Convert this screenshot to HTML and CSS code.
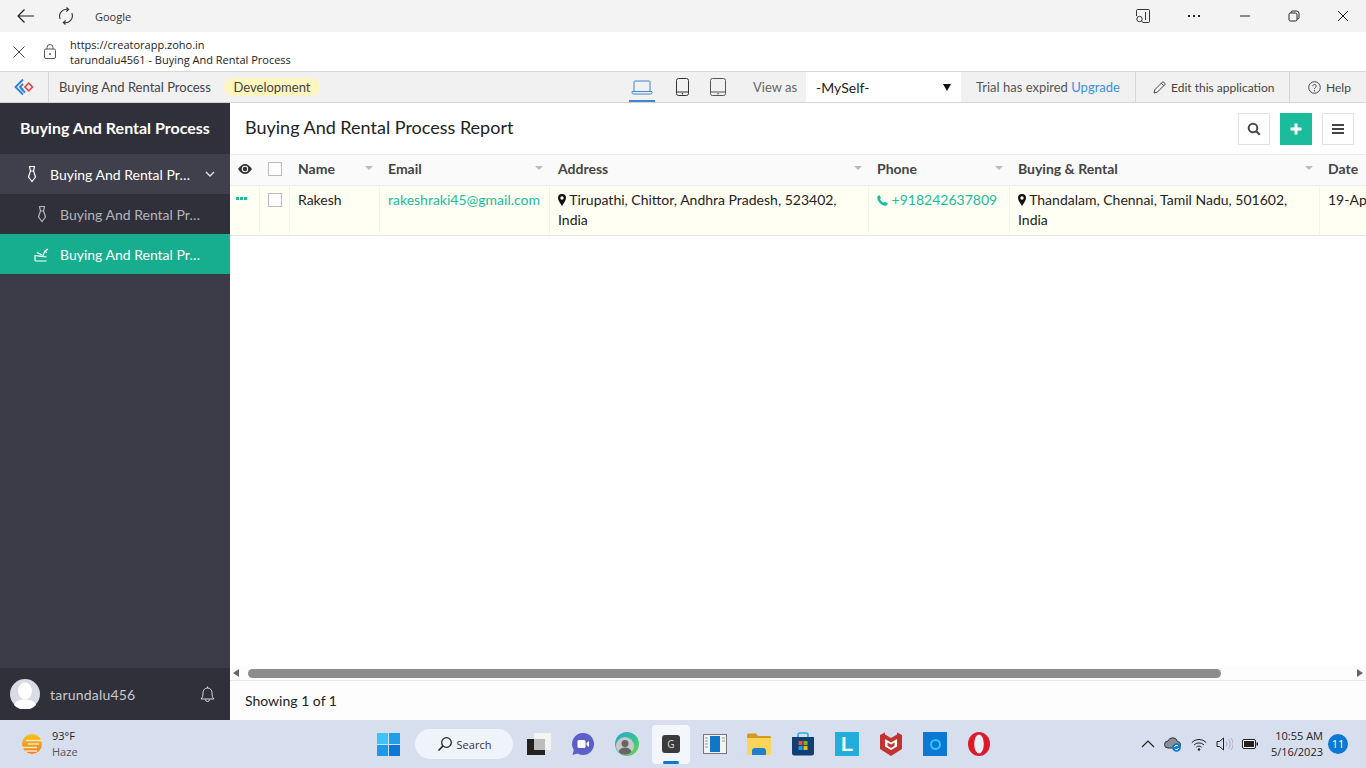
FILE: index.html
```html
<!DOCTYPE html>
<html lang="en">
<head>
    <meta charset="UTF-8">
    <title>Buying And Rental Process</title>
    <link rel="stylesheet" href="styles.css">
</head>
<body>
    <!-- browser chrome -->
    <div class="titlebar">
        <svg class="tb-back" width="20" height="16" viewBox="0 0 20 16"><path d="M18 8H2M8.500 1.500 2 8l6.500 6.500" fill="none" stroke="#222" stroke-width="1.200"/></svg>
        <svg class="tb-reload" width="18" height="18" viewBox="0 0 18 18"><path d="M3.200 12A7 7 0 0 1 11.500 2.500M14.800 6A7 7 0 0 1 6.500 15.500M9.500 .5l2.200 2-2.400 2M8.500 17.500l-2.200-2 2.400-2" fill="none" stroke="#333" stroke-width="1.100"/></svg>
        <span class="tb-title">Google</span>
        <div class="win-controls">
            <svg width="16" height="16" viewBox="0 0 16 16"><path d="M4 1.500h9.500a1 1 0 0 1 1 1v11a1 1 0 0 1-1 1H8M1.500 8V2.500a1 1 0 0 1 1-1H4M10.500 4v8" fill="none" stroke="#333"/><circle cx="4.500" cy="11" r="2.700" fill="none" stroke="#333"/><path d="M6.500 13 8.500 15" stroke="#333"/></svg>
            <span class="dots"><i></i><i></i><i></i></span>
            <svg width="12" height="12" viewBox="0 0 12 12"><path d="M1 6h10" stroke="#222"/></svg>
            <svg width="12" height="12" viewBox="0 0 12 12"><path d="M3 3V2.500A1.500 1.500 0 0 1 4.500 1h4A2.500 2.500 0 0 1 11 3.500v4A1.500 1.500 0 0 1 9.500 9H9" fill="none" stroke="#222"/><rect x="1" y="3" width="8" height="8" rx="1.500" fill="none" stroke="#222"/></svg>
            <svg width="12" height="12" viewBox="0 0 12 12"><path d="M1 1l10 10M11 1 1 11" stroke="#222"/></svg>
        </div>
    </div>
    <div class="addressbar">
        <svg class="ab-close" width="12" height="12" viewBox="0 0 12 12"><path d="M.5.5l11 11M11.500.5l-11 11" stroke="#444"/></svg>
        <svg class="ab-lock" width="12" height="15" viewBox="0 0 12 15"><rect x=".5" y="5" width="11" height="9.500" rx="1.500" fill="none" stroke="#555"/><path d="M3 5V3.500a3 3 0 0 1 6 0V5" fill="none" stroke="#555"/><circle cx="6" cy="10" r="1" fill="#555"/></svg>
        <div class="ab-text">
            <div>https://creatorapp.zoho.in</div>
            <div>tarundalu4561 - Buying And Rental Process</div>
        </div>
    </div>

    <!-- zoho top bar -->
    <div class="appbar">
        <div class="app-logo">
            <svg width="20" height="18" viewBox="0 0 20 18"><path d="M9 1.500 1.500 9 9 16.500M9 6 6 9l3 3" fill="none" stroke="#2c7fd6" stroke-width="1.800"/><path d="M11 14.500 7 10.500" stroke="#2c7fd6" stroke-width="1.800"/><rect x="12" y="6.300" width="5.400" height="5.400" transform="rotate(45 14.700 9)" fill="none" stroke="#e8434b" stroke-width="1.600"/></svg>
        </div>
        <span class="app-name">Buying And Rental Process</span>
        <span class="env-pill">Development</span>
        <div class="devices">
            <span class="device active"><svg width="22" height="15" viewBox="0 0 22 15"><path d="M3 11V2a1 1 0 0 1 1-1h14a1 1 0 0 1 1 1v9M1 11.500h20v1a1.500 1.500 0 0 1-1.500 1.500h-17A1.500 1.500 0 0 1 1 12.500z" fill="none" stroke="#3d86d0"/></svg></span>
            <span class="device"><svg width="13" height="18" viewBox="0 0 13 18"><rect x=".5" y=".5" width="12" height="17" rx="2" fill="none" stroke="#333"/><path d="M1 14h11" stroke="#333"/><circle cx="6.500" cy="15.800" r=".8" fill="#333"/></svg></span>
            <span class="device"><svg width="16" height="18" viewBox="0 0 16 18"><rect x=".5" y=".5" width="15" height="17" rx="2" fill="none" stroke="#555"/><path d="M1 14h14" stroke="#555"/><circle cx="8" cy="15.800" r=".8" fill="#555"/></svg></span>
        </div>
        <span class="view-as">View as</span>
        <div class="view-select"><span>-MySelf-</span><i class="caret"></i></div>
        <span class="trial">Trial has expired <a>Upgrade</a></span>
        <span class="bar-btn edit-btn">
            <svg width="13" height="13" viewBox="0 0 13 13"><path d="M1 12l.8-3.300L9.300 1.200a1 1 0 0 1 1.400 0l1.100 1.100a1 1 0 0 1 0 1.400L4.300 11.200zM8.300 2.200l2.500 2.500" fill="none" stroke="#444"/></svg>
            Edit this application
        </span>
        <span class="bar-btn help-btn">
            <svg width="13" height="13" viewBox="0 0 13 13"><circle cx="6.500" cy="6.500" r="5.800" fill="none" stroke="#444"/><path d="M4.800 5.200a1.700 1.700 0 1 1 2.600 1.400c-.6.400-.9.700-.9 1.400" fill="none" stroke="#444"/><circle cx="6.500" cy="9.800" r=".7" fill="#444"/></svg>
            Help
        </span>
    </div>

    <div class="main">
        <aside class="sidebar">
            <div class="side-title">Buying And Rental Process</div>
            <div class="nav-item nav-parent">
                <svg class="nav-icon" width="12" height="18" viewBox="0 0 12 18"><path d="M3 1.500h6M3.500 1.500 4.500 6 2.500 12 6 16.500 9.500 12 7.500 6 8.500 1.500M4.500 6h3" fill="none" stroke="currentColor" stroke-width="1.200"/></svg>
                <span class="nav-label">Buying And Rental Process</span>
                <svg class="nav-chevron" width="10" height="6" viewBox="0 0 10 6"><path d="M1 1l4 4 4-4" fill="none" stroke="#e4e4e8" stroke-width="1.300"/></svg>
            </div>
            <div class="nav-item nav-sub">
                <svg class="nav-icon" width="12" height="18" viewBox="0 0 12 18"><path d="M3 1.500h6M3.500 1.500 4.500 6 2.500 12 6 16.500 9.500 12 7.500 6 8.500 1.500M4.500 6h3" fill="none" stroke="currentColor" stroke-width="1.200"/></svg>
                <span class="nav-label">Buying And Rental Process</span>
            </div>
            <div class="nav-item nav-sub nav-active">
                <svg class="nav-icon" width="16" height="16" viewBox="0 0 16 16"><path d="M1.500 9.500c4 0 5.500 1 8 1 1.500 0 3 .3 4 .5M2 9.500V14a1 1 0 0 0 1 1h10.500M9.500 10.500 12 5l3-2M4 6.500l5 2.500M11.500 5 14 6.500" fill="none" stroke="currentColor" stroke-width="1.200"/></svg>
                <span class="nav-label">Buying And Rental Process</span>
            </div>
            <div class="side-user">
                <span class="avatar"><svg width="30" height="30" viewBox="0 0 30 30"><circle cx="15" cy="15" r="15" fill="#d9dce4"/><ellipse cx="15" cy="12" rx="7" ry="8.500" fill="#fff"/><path d="M4 26c2-5 7-5.500 11-5.500S24 21 26 26a15 15 0 0 1-22 0z" fill="#fff"/></svg></span>
                <span class="user-name">tarundalu456</span>
                <svg class="bell" width="15" height="18" viewBox="0 0 15 18"><path d="M1 14c1.500-1.500 2-2.500 2-6.500a4.500 4.500 0 0 1 9 0c0 4 .5 5 2 6.500zM5.500 14.500a2 2 0 0 0 4 0M7.500 3V1.500" fill="none" stroke="#d8d8dc"/></svg>
            </div>
        </aside>

        <section class="content">
            <div class="report-head">
                <h1>Buying And Rental Process Report</h1>
                <div class="report-actions">
                    <span class="act-btn"><svg width="14" height="14" viewBox="0 0 14 14"><circle cx="6" cy="6" r="4.300" fill="none" stroke="#4a4a50" stroke-width="2"/><path d="M9 9l3.800 3.800" stroke="#4a4a50" stroke-width="2.200"/></svg></span>
                    <span class="act-btn act-add"><svg width="12" height="12" viewBox="0 0 12 12"><path d="M6 .5v11M.5 6h11" stroke="#fff" stroke-width="3"/></svg></span>
                    <span class="act-btn"><svg width="12" height="10" viewBox="0 0 12 10"><path d="M0 1h12M0 5h12M0 9h12" stroke="#444" stroke-width="1.800"/></svg></span>
                </div>
            </div>

            <div class="report-table">
                <div class="tr thead">
                    <div class="td cell-icon"><svg width="14" height="10" viewBox="0 0 14 10"><path d="M0 5c2-3 4.500-5 7-5s5 2 7 5c-2 3-4.500 5-7 5S2 8 0 5z" fill="#333"/><circle cx="7" cy="5" r="3.200" fill="#fafafa"/><circle cx="7" cy="5" r="2.200" fill="#333"/></svg></div>
                    <div class="td cell-check"><i class="check"></i></div>
                    <div class="td th">Name<i class="sort"></i></div>
                    <div class="td th">Email<i class="sort"></i></div>
                    <div class="td th">Address<i class="sort"></i></div>
                    <div class="td th">Phone<i class="sort"></i></div>
                    <div class="td th">Buying &amp; Rental<i class="sort"></i></div>
                    <div class="td th">Date</div>
                </div>
                <div class="tr trow">
                    <div class="td cell-icon row-more"><i></i><i></i><i></i></div>
                    <div class="td cell-check"><i class="check"></i></div>
                    <div class="td">Rakesh</div>
                    <div class="td link">rakeshraki45@gmail.com</div>
                    <div class="td"><svg class="pin" width="8" height="12" viewBox="0 0 8 12"><path fill-rule="evenodd" d="M4 0a4 4 0 0 1 4 4c0 2.500-2.500 5.500-4 8C2.500 9.500 0 6.500 0 4a4 4 0 0 1 4-4zm0 2.300a1.700 1.700 0 1 0 0 3.400 1.700 1.700 0 0 0 0-3.400z" fill="#111"/></svg> Tirupathi, Chittor, Andhra Pradesh, 523402, India</div>
                    <div class="td link"><svg class="phone" width="11" height="11" viewBox="0 0 11 11"><path d="M2.500.3 4 2.700 3 4c.5 1.500 2 3 3.700 3.800L8 6.800l2.700 1.500c0 1.200-1 2.400-2.200 2.400C4.500 10.700.3 6.500.3 2.500.3 1.300 1.300.4 2.500.3z" fill="#1abc9c"/></svg> +918242637809</div>
                    <div class="td"><svg class="pin" width="8" height="12" viewBox="0 0 8 12"><path fill-rule="evenodd" d="M4 0a4 4 0 0 1 4 4c0 2.500-2.500 5.500-4 8C2.500 9.500 0 6.500 0 4a4 4 0 0 1 4-4zm0 2.300a1.700 1.700 0 1 0 0 3.400 1.700 1.700 0 0 0 0-3.400z" fill="#111"/></svg> Thandalam, Chennai, Tamil Nadu, 501602, India</div>
                    <div class="td td-date">19-Apr-2023</div>
                </div>
            </div>

            <div class="hscroll">
                <i class="arrow-left"></i>
                <div class="hscroll-track"><div class="hscroll-thumb"></div></div>
                <i class="arrow-right"></i>
            </div>
            <div class="report-foot">Showing 1 of 1</div>
        </section>
    </div>

    <!-- windows taskbar -->
    <div class="taskbar">
        <div class="weather">
            <svg width="24" height="22" viewBox="0 0 24 22"><defs><linearGradient id="sun" x1="0" y1="0" x2="0" y2="1"><stop offset="0" stop-color="#fcc21b"/><stop offset="1" stop-color="#ee7f1d"/></linearGradient></defs><circle cx="12" cy="11" r="10" fill="url(#sun)"/><path d="M6 7.500h18M8 11h11M1 14.500h16M5 18h12" stroke="#f4e6c0" stroke-width="1.300"/></svg>
            <div class="weather-text">
                <div>93°F</div>
                <div class="haze">Haze</div>
            </div>
        </div>
        <div class="task-center">
            <span class="task-cell">
                <svg width="23" height="23" viewBox="0 0 23 23"><rect width="11" height="11" fill="#3cc4f5"/><rect x="12" width="11" height="11" fill="#1f9fe8"/><rect y="12" width="11" height="11" fill="#1a9aea"/><rect x="12" y="12" width="11" height="11" fill="#0a78d4"/></svg>
            </span>
            <span class="search-pill">
                <svg width="16" height="16" viewBox="0 0 16 16"><circle cx="9.500" cy="6.500" r="4.800" fill="none" stroke="#222" stroke-width="1.300"/><path d="M6 10 1.500 14.500" stroke="#222" stroke-width="1.600"/></svg>
                Search
            </span>
            <span class="task-cell">
                <svg width="24" height="24" viewBox="0 0 24 24"><rect x="7" y="1" width="17" height="17" fill="#f4f4f4"/><rect x="7" y="7" width="11" height="11" fill="#b8b8b8"/><rect y="7" width="18" height="16" fill="#222"/><rect x="7" y="7" width="11" height="11" fill="#bdbdbd"/></svg>
            </span>
            <span class="task-cell">
                <svg width="24" height="24" viewBox="0 0 24 24"><path d="M12 1a11 11 0 1 1-5.500 20.500L1.500 23l1.300-5A11 11 0 0 1 12 1z" fill="#5b5fc7"/><rect x="6.500" y="8" width="8" height="8" rx="1.500" fill="#fff"/><path d="M15.500 11 18 9v6l-2.500-2z" fill="#fff"/></svg>
            </span>
            <span class="task-cell">
                <svg width="24" height="24" viewBox="0 0 24 24"><defs><linearGradient id="edge" x1="0" y1="0" x2="1" y2="1"><stop offset="0" stop-color="#2aa4dc"/><stop offset=".6" stop-color="#38c78b"/><stop offset="1" stop-color="#7dd33f"/></linearGradient></defs><circle cx="12" cy="12" r="12" fill="url(#edge)"/><circle cx="10" cy="14" r="9" fill="#c9c9c9"/><circle cx="10" cy="11.500" r="3.500" fill="#666"/><path d="M3.500 20c1-3.500 4-4.500 6.500-4.500s5.500 1 6.500 4.500a9 9 0 0 1-13 0z" fill="#666"/></svg>
            </span>
            <span class="task-cell task-active">
                <span class="g-icon">G</span>
            </span>
            <span class="task-cell">
                <svg width="24" height="20" viewBox="0 0 24 20"><rect x=".5" y=".5" width="23" height="19" fill="#f2f2f2" stroke="#777"/><rect x="7" y="2" width="10" height="16" fill="#1076c6"/><path d="M2 4h3M2 7h3M2 10h3M2 13h3M19 4h3M19 7h3" stroke="#999"/></svg>
            </span>
            <span class="task-cell">
                <svg width="24" height="22" viewBox="0 0 24 22"><path d="M0 2a1.500 1.500 0 0 1 1.500-1.500H9L11 3h11.500A1.500 1.500 0 0 1 24 4.500V8H0z" fill="#d39a1d"/><path d="M0 5h24v15.500a1.500 1.500 0 0 1-1.500 1.500h-21A1.500 1.500 0 0 1 0 20.500z" fill="#fcd45c"/><path d="M5 22v-4a3 3 0 0 1 3-3h8a3 3 0 0 1 3 3v4z" fill="#1e7fcb"/></svg>
            </span>
            <span class="task-cell">
                <svg width="24" height="24" viewBox="0 0 24 24"><path d="M7 6V3a2 2 0 0 1 2-2h6a2 2 0 0 1 2 2v3" fill="none" stroke="#29a9e8" stroke-width="1.600"/><path d="M1 5h22v16a2.500 2.500 0 0 1-2.500 2.500h-17A2.500 2.500 0 0 1 1 21z" fill="#123f73"/><rect x="7.500" y="9" width="4" height="4" fill="#f25022"/><rect x="12.500" y="9" width="4" height="4" fill="#7fba00"/><rect x="7.500" y="14" width="4" height="4" fill="#00a4ef"/><rect x="12.500" y="14" width="4" height="4" fill="#ffb900"/></svg>
            </span>
            <span class="task-cell">
                <span class="l-icon">L</span>
            </span>
            <span class="task-cell">
                <svg width="22" height="24" viewBox="0 0 22 24"><path d="M0 3l5-2.500v2l6 3.500 6-3.500v-2L22 3v14l-11 7L0 17z" fill="#c3332f"/><path d="M5 7l6 3.500L17 7v7.500L11 18l-6-3.500z" fill="#fff"/><path d="M7.500 10.500l3.500 2 3.500-2v3.300L11 16l-3.500-2.200z" fill="#c3332f"/></svg>
            </span>
            <span class="task-cell">
                <span class="cortana"><i></i></span>
            </span>
            <span class="task-cell">
                <svg width="22" height="24" viewBox="0 0 22 24"><ellipse cx="11" cy="12" rx="11" ry="12" fill="#dc1a2a"/><ellipse cx="11" cy="12" rx="4.800" ry="9.500" fill="#e8eef6"/></svg>
            </span>
        </div>
        <div class="tray">
            <svg width="14" height="8" viewBox="0 0 14 8"><path d="M1 7l6-6 6 6" fill="none" stroke="#222" stroke-width="1.200"/></svg>
            <svg class="tray-cloud" width="18" height="16" viewBox="0 0 18 16"><path d="M4 12a3.500 3.500 0 0 1 0-7 5 5 0 0 1 9.500.5A3.300 3.300 0 0 1 14 12z" fill="#8a8e96" stroke="#333"/><circle cx="12.500" cy="11.500" r="4.300" fill="#0a78d4"/><path d="M10.500 11a2 2 0 0 1 3.600-.8M14.500 12a2 2 0 0 1-3.600.8" fill="none" stroke="#fff"/></svg>
            <svg width="16" height="13" viewBox="0 0 16 13"><path d="M.8 4.500a10 10 0 0 1 14.400 0M3 7a7 7 0 0 1 10 0M5.300 9.300a3.600 3.600 0 0 1 5.400 0" fill="none" stroke="#222"/><circle cx="8" cy="11.500" r="1.200" fill="#222"/></svg>
            <svg width="17" height="14" viewBox="0 0 17 14"><path d="M1 4.500h2.500L7.500 1v12L3.500 9.500H1z" fill="none" stroke="#222"/><path d="M10 4.500a4 4 0 0 1 0 5M12.500 2.500a7 7 0 0 1 0 9M15 1a9.500 9.500 0 0 1 0 12" fill="none" stroke="#aab"/></svg>
            <svg width="16" height="10" viewBox="0 0 16 10"><rect x=".5" y=".5" width="13" height="9" rx="1.500" fill="#fff" stroke="#222"/><rect x="2" y="2" width="10" height="6" fill="#222"/><rect x="14.500" y="3.500" width="1.500" height="3" fill="#222"/></svg>
            <div class="clock">
                <div>10:55 AM</div>
                <div>5/16/2023</div>
            </div>
            <span class="notif">11</span>
        </div>
    </div>
</body>
</html>
```

FILE: styles.css
```css
html, body {
    margin: 0;
    padding: 0;
    height: 768px;
    overflow: hidden;
}

body {
    width: 1366px;
    display: flex;
    flex-direction: column;
    font-family: "Lato", sans-serif;
    color: #222;
    background: #fff;
}

/* browser chrome */
.titlebar {
    height: 32px;
    display: flex;
    align-items: center;
    background: #f3f3f3;
    font-family: "Open Sans", sans-serif;
    font-size: 11px;
    flex: none;
}

.tb-back {
    margin-left: 16px;
}

.tb-reload {
    margin-left: 21px;
}

.tb-title {
    margin-left: 20px;
    color: #333;
}

.win-controls {
    margin-left: auto;
    margin-right: 17px;
    display: flex;
    align-items: center;
    gap: 37px;
}

.dots {
    display: flex;
    gap: 3px;
    margin: 0 2px 0 0;
}

.dots i {
    width: 2px;
    height: 2px;
    background: #222;
}

.addressbar {
    height: 39px;
    display: flex;
    align-items: center;
    background: #fff;
    border-bottom: 1px solid #d8d8d8;
    font-family: "Open Sans", sans-serif;
    font-size: 11px;
    line-height: 15px;
    flex: none;
    box-sizing: content-box;
}

.ab-close {
    margin-left: 13px;
}

.ab-lock {
    margin-left: 19px;
}

.ab-text {
    margin-left: 14px;
    color: #222;
}

/* zoho bar */
.appbar {
    height: 30px;
    display: flex;
    align-items: center;
    background: #f1f1f1;
    border-bottom: 1px solid #d4d4d4;
    font-size: 13px;
    color: #444;
    flex: none;
}

.app-logo {
    width: 48px;
    height: 100%;
    display: flex;
    align-items: center;
    justify-content: center;
    border-right: 1px solid #d6d6de;
    box-sizing: content-box;
}

.app-name {
    margin-left: 10px;
    width: 165px;
    white-space: nowrap;
}

.env-pill {
    width: 96px;
    text-align: center;
    line-height: 18px;
    background: #fdf6bf;
    border-radius: 9px;
    color: #444;
}

.devices {
    margin-left: 309px;
    display: flex;
    height: 100%;
    align-items: center;
    gap: 21px;
    width: 124px;
}

.device {
    height: 100%;
    display: flex;
    align-items: center;
    box-sizing: border-box;
}

.device.active {
    width: 26px;
    justify-content: center;
    border-bottom: 2px solid #3d86d0;
    padding-top: 2px;
}

.view-as {
    color: #666;
    width: 53px;
}

.view-select {
    width: 135px;
    height: 100%;
    padding: 0 10px;
    display: flex;
    align-items: center;
    justify-content: space-between;
    background: #fff;
    color: #222;
    font-size: 14px;
}

.caret {
    width: 0;
    height: 0;
    border-left: 4px solid transparent;
    border-right: 4px solid transparent;
    border-top: 7px solid #111;
}

.trial {
    width: 159px;
    padding-left: 15px;
    color: #555;
    white-space: nowrap;
}

.trial a {
    color: #3a8fe0;
}

.bar-btn {
    height: 100%;
    display: flex;
    align-items: center;
    gap: 5px;
    border-left: 1px solid #d6d6de;
    font-size: 12px;
    color: #444;
    white-space: nowrap;
}

.edit-btn {
    width: 136px;
    padding-left: 17px;
}

.help-btn {
    padding-left: 18px;
}

/* page */
.main {
    height: 617px;
    display: flex;
    flex: none;
}

.sidebar {
    width: 230px;
    display: flex;
    flex-direction: column;
    background: #3a3b46;
    flex: none;
}

.side-title {
    height: 51px;
    line-height: 50px;
    padding: 0 20px;
    background: #2f3039;
    color: #fff;
    font-size: 16px;
    font-weight: 700;
    white-space: nowrap;
    overflow: hidden;
    text-overflow: ellipsis;
    width: 190px;
}

.nav-item {
    height: 40px;
    display: flex;
    align-items: center;
    font-size: 14px;
    color: #fff;
}

.nav-parent {
    background: #3f404b;
    padding-left: 26px;
}

.nav-sub {
    background: #2f3039;
    color: #b5b5bc;
    padding-left: 36px;
}

.nav-active {
    background: #17ae8f;
    color: #fff;
    padding-left: 33px;
}

.nav-icon {
    flex: none;
}

.nav-label {
    margin-left: 12px;
    white-space: nowrap;
    overflow: hidden;
    text-overflow: ellipsis;
    width: 145px;
}

.nav-parent .nav-label {
    width: 146px;
}

.nav-active .nav-label {
    margin-left: 11px;
}

.nav-chevron {
    margin-left: 9px;
}

.side-user {
    margin-top: auto;
    height: 52px;
    display: flex;
    align-items: center;
    background: #2f3039;
    color: #c9c9ce;
    font-size: 14px;
    padding-left: 10px;
}

.avatar {
    width: 30px;
    height: 30px;
}

.user-name {
    margin-left: 10px;
    letter-spacing: .2px;
}

.bell {
    margin-left: auto;
    margin-right: 15px;
}

.content {
    flex: 1;
    min-width: 0;
    display: flex;
    flex-direction: column;
}

.report-head {
    height: 51px;
    display: flex;
    align-items: center;
    justify-content: space-between;
    padding: 0 24px 0 15px;
    border-bottom: 1px solid #eee;
}

.report-head h1 {
    margin: 0 0 4px;
    font-size: 18px;
    font-weight: 400;
    color: #222;
}

.report-actions {
    display: flex;
    gap: 10px;
    margin-top: 1px;
    margin-right: -12px;
}

.act-btn {
    width: 30px;
    height: 30px;
    display: flex;
    align-items: center;
    justify-content: center;
    border: 1px solid #e2e2e2;
    background: #fff;
}

.act-add {
    width: 32px;
    height: 32px;
    border: 0;
    background: #1abc9c;
}

/* table */
.report-table {
    flex: 1;
    overflow: hidden;
    font-size: 14px;
    line-height: 20px;
}

.tr {
    display: grid;
    grid-template-columns: 30px 30px 90px 170px 319px 141px 310px 120px;
    width: 1210px;
}

.thead {
    height: 30px;
    background: #fafafa;
    border-bottom: 1px solid #ececec;
    font-weight: 700;
    color: #444;
}

.trow {
    height: 49px;
    background: #fffff3;
    border-bottom: 1px solid #e8e8e8;
    color: #222;
}

.td {
    padding: 4px 8px 0;
    position: relative;
    border-right: 1px solid #f4f4e8;
    box-sizing: border-box;
}

.thead .td {
    border-right: 0;
}

.td-date {
    white-space: nowrap;
}

.th .sort {
    position: absolute;
    top: 11px;
    right: 7px;
    width: 0;
    height: 0;
    border-left: 4px solid transparent;
    border-right: 4px solid transparent;
    border-top: 4px solid #bbb;
}

.cell-icon {
    padding: 4px 0 0;
    text-align: center;
}

.row-more {
    display: flex;
    justify-content: center;
    gap: 1px;
    padding: 11px 6px 0 0;
}

.row-more i {
    width: 3px;
    height: 3px;
    background: #1abc9c;
}

.cell-check {
    padding: 7px 0 0 8px;
}

.check {
    display: block;
    width: 12px;
    height: 12px;
    background: #fff;
    border: 1px solid #bbb;
}

.link {
    color: #1abc9c;
}

.pin,
.phone {
    vertical-align: -1px;
}

/* scroll + footer */
.hscroll {
    height: 14px;
    display: flex;
    align-items: center;
    background: #fdfdfd;
    border-bottom: 1px solid #e6e9f4;
    padding: 0 3px;
}

.arrow-left,
.arrow-right {
    width: 0;
    height: 0;
    border-top: 4px solid transparent;
    border-bottom: 4px solid transparent;
}

.arrow-left {
    border-right: 6px solid #666;
}

.arrow-right {
    border-left: 6px solid #666;
}

.hscroll-track {
    flex: 1;
    padding: 0 136px 0 9px;
}

.hscroll-thumb {
    height: 9px;
    border-radius: 5px;
    background: #8c8c8c;
}

.report-foot {
    height: 39px;
    line-height: 39px;
    padding-left: 15px;
    font-size: 14px;
    color: #222;
    background: #fdfdfd;
}

/* taskbar */
.taskbar {
    height: 48px;
    display: flex;
    align-items: center;
    background: #d7dfee;
    font-family: "Open Sans", sans-serif;
    font-size: 11px;
    color: #222;
    flex: none;
    position: relative;
}

.weather {
    width: 366px;
    display: flex;
    align-items: center;
    padding-left: 20px;
    gap: 8px;
    box-sizing: border-box;
    flex: none;
}

.weather-text {
    line-height: 16px;
}

.haze {
    color: #555;
}

.task-center {
    display: flex;
    align-items: center;
    flex: none;
}

.task-cell {
    width: 44px;
    height: 48px;
    display: flex;
    align-items: center;
    justify-content: center;
    box-sizing: border-box;
}

.search-pill {
    width: 98px;
    height: 30px;
    margin: 0 4px 0 5px;
    border-radius: 15px;
    background: #eff4fb;
    display: flex;
    align-items: center;
    justify-content: center;
    gap: 4px;
    color: #333;
}

.task-active {
    height: 39px;
    width: 38px;
    margin: 0 3px;
    background: #f3f6fb;
    border-radius: 4px;
    position: relative;
}

.task-active::after {
    content: "";
    position: absolute;
    bottom: 0;
    left: 11px;
    width: 16px;
    height: 3px;
    border-radius: 2px;
    background: #0a78d4;
}

.g-icon {
    width: 18px;
    height: 18px;
    border-radius: 3px;
    background: #3b3b3b;
    color: #ddd;
    font-size: 10px;
    line-height: 18px;
    text-align: center;
}

.l-icon {
    width: 24px;
    height: 24px;
    background: #22aedc;
    color: #fff;
    font-family: "Liberation Sans", sans-serif;
    font-size: 20px;
    font-weight: 700;
    line-height: 24px;
    text-align: center;
}

.cortana {
    width: 24px;
    height: 24px;
    background: #0a78d4;
    display: flex;
    align-items: center;
    justify-content: center;
}

.cortana i {
    width: 7px;
    height: 7px;
    border: 2px solid #35c6f0;
    border-radius: 50%;
}

.tray {
    margin-left: auto;
    width: 226px;
    padding-left: 1px;
    display: flex;
    align-items: center;
    box-sizing: border-box;
    gap: 9px;
    padding-right: 18px;
}

.clock {
    margin-left: auto;
    text-align: right;
    line-height: 16px;
}

.notif {
    width: 20px;
    height: 20px;
    border-radius: 50%;
    background: #0a78d4;
    color: #fff;
    font-size: 11px;
    line-height: 20px;
    text-align: center;
    margin-left: -4px;
    flex: none;
}
```
